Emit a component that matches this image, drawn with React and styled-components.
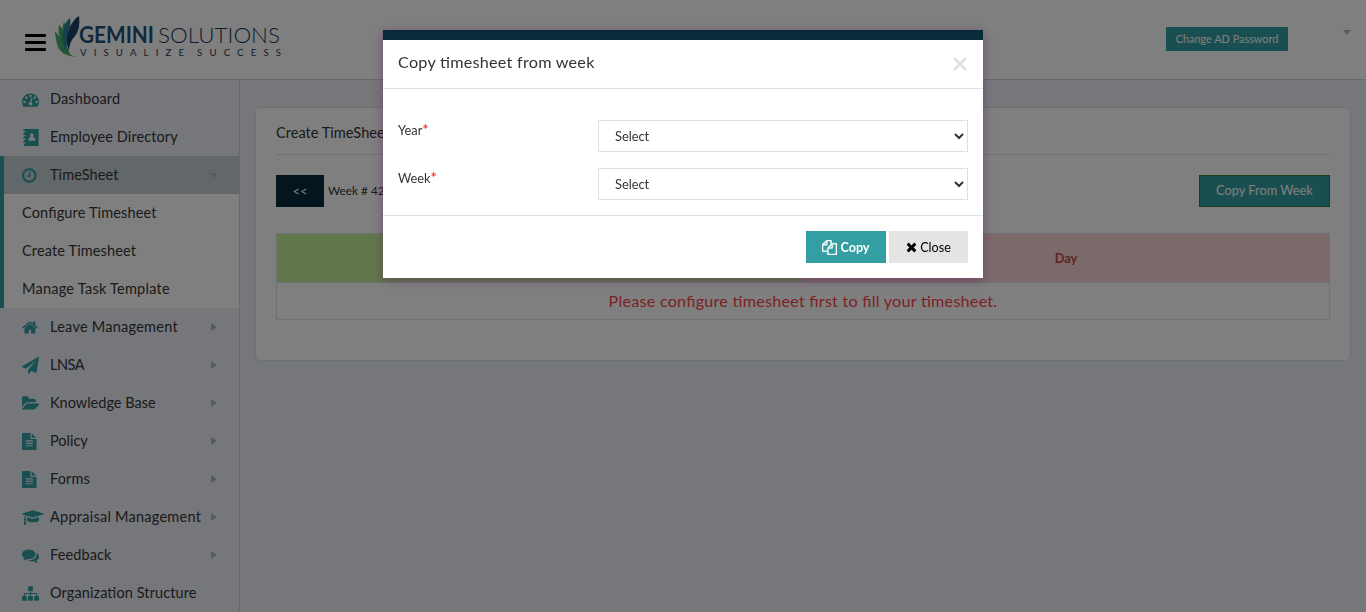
import React from 'react';
import styled, { createGlobalStyle } from 'styled-components';

const teal = '#349fa2';
const navy = '#092a3b';
const line = '#d8e2e7';

const GlobalStyle = createGlobalStyle`
  * { box-sizing: border-box; }
  html, body { margin: 0; height: 612px; overflow: hidden; }
  body {
    background: #eceff4;
    color: #343434;
    font-family: Lato, "Liberation Sans", sans-serif;
    font-size: 14.5px;
    font-feature-settings: "liga" 1;
  }
`;

const Page = styled.div`
  display: flex;
  flex-direction: column;
  height: 612px;
`;

const Header = styled.header`
  display: flex;
  align-items: flex-start;
  height: 80px;
  padding: 0 15px 0 25px;
  background: #fff;
  border-bottom: 1px solid #c5d6de;
`;

const Burger = styled.div`
  display: flex;
  flex-direction: column;
  gap: 4px;
  width: 21px;
  margin-top: 34px;
  i { height: 3px; background: #000; border-radius: 1px; }
`;

const LogoSvg = styled.svg`
  display: block;
  width: 230px;
  height: 46px;
  margin: 14px auto 0 8px;
`;

const PasswordButton = styled.button`
  width: 122px;
  height: 24px;
  margin: 27px 55px 0 0;
  padding: 0 0 2px;
  border: 0;
  background: ${teal};
  color: #fff;
  font: 10.9px Lato, sans-serif;
`;

const Caret = styled.i`
  border: 4px solid transparent;
  border-bottom-width: 0;
  border-top: 5px solid #adb7be;
  margin-top: 30px;
`;

const Body = styled.div`
  display: flex;
  flex: 1;
  min-height: 0;
`;

const Sidebar = styled.nav`
  width: 240px;
  border-right: 1px solid #c5d6de;
  overflow: hidden;
`;

const Group = styled.div`
  box-shadow: inset 4px 0 0 ${teal};
  background: #fff;
`;

const Item = styled.a`
  display: flex;
  align-items: center;
  height: 38px;
  padding-left: 22px;
  ${(p) => p.$active && `background: #c4ced3; box-shadow: inset 4px 0 0 ${teal};`}
`;

const Label = styled.span`
  padding-bottom: 2px;
  white-space: nowrap;
  letter-spacing: ${(p) => p.$spacing}px;
`;

const IconBox = styled.span`
  display: flex;
  width: 28px;
  color: ${teal};
`;

const Arrow = styled.i`
  margin-left: auto;
  margin-right: ${(p) => (p.$down ? 21 : 22)}px;
  border-style: solid;
  border-color: transparent;
  ${(p) =>
    p.$down
      ? 'border-width: 5px 4px 0; border-top-color: #adb7be;'
      : 'border-width: 4px 0 4px 6px; border-left-color: #adb7be;'}
`;

const Glyph = styled.svg`
  display: block;
  flex: none;
  fill: currentColor;
`;

const Main = styled.main`
  flex: 1;
  padding: 27px 15px 0;
`;

const Card = styled.section`
  height: 254px;
  padding: 0 20px;
  background: #fff;
  border: 1px solid ${line};
  border-radius: 5px;
`;

const CardTitle = styled.h5`
  display: flex;
  align-items: center;
  height: 47px;
  margin: 0;
  padding-top: 2px;
  border-bottom: 1px solid ${line};
  font-size: 14.6px;
  font-weight: 400;
`;

const Toolbar = styled.div`
  display: flex;
  align-items: center;
  gap: 4px;
  height: 32px;
  margin-top: 20px;
  font-size: 11.8px;
  span { padding-bottom: 2px; }
`;

const NavButton = styled.button`
  width: 48px;
  height: 32px;
  padding-bottom: 2px;
  border: 0;
  background: ${navy};
  color: #fff;
  font: 13px Lato, sans-serif;
`;

const CopyWeekButton = styled.button`
  width: 131px;
  height: 32px;
  margin-left: auto;
  padding: 0 0 2px;
  border: 1px solid #2a7f3a;
  background: ${teal};
  color: #fff;
  font: 12.8px Lato, sans-serif;
`;

const Table = styled.div`
  display: grid;
  grid-template-columns: 1fr 1fr;
  margin-top: 26px;
  border: 1px solid ${line};
`;

const HeadCell = styled.div`
  display: flex;
  align-items: center;
  justify-content: center;
  height: 49px;
  padding-bottom: 1px;
  background: ${(p) => p.$bg};
  border-bottom: 1px solid ${line};
  color: #b94a48;
  font-size: 12.8px;
  font-weight: 700;
`;

const Message = styled.div`
  grid-column: 1 / -1;
  height: 36px;
  line-height: 36px;
  text-align: center;
  color: #fa424a;
  font-size: 16.2px;
  letter-spacing: 0.22px;
`;

const Overlay = styled.div`
  position: fixed;
  inset: 0;
  background: rgba(0, 0, 0, 0.5);
`;

const Modal = styled.div`
  width: 600px;
  height: 248px;
  margin: 30px auto 0;
  background: #fff;
  border-top: 10px solid ${navy};
  box-shadow: 0 2px 10px rgba(90, 0, 90, 0.38);
`;

const ModalHeader = styled.div`
  display: flex;
  justify-content: space-between;
  height: 49px;
  padding: 12px 16px 0 15px;
  border-bottom: 1px solid ${line};
  font-size: 16.2px;
  letter-spacing: 0.24px;
`;

const CloseX = styled.svg`
  width: 14px;
  height: 14px;
  margin-top: 5px;
  stroke: #e2e3e8;
  stroke-width: 3;
  stroke-linecap: round;
`;

const ModalBody = styled.div`
  display: flex;
  flex-direction: column;
  gap: 16px;
  height: 127px;
  padding: 31px 15px 0;
  border-bottom: 1px solid ${line};
`;

const Field = styled.label`
  display: flex;
  height: 32px;
  font-size: 12.8px;
  span { width: 200px; padding-top: 2px; }
  b { color: #f00; font-weight: 400; font-size: 15px; line-height: 12px; }
`;

const Select = styled.select`
  width: 370px;
  height: 32px;
  padding: 0 12px;
  border: 1px solid ${line};
  border-radius: 0;
  background: #fff;
  color: #343434;
  font: 12.8px Lato, sans-serif;
`;

const ModalFooter = styled.div`
  display: flex;
  justify-content: flex-end;
  gap: 3px;
  padding: 15px 15px 0;
`;

const ModalButton = styled.button`
  display: flex;
  align-items: center;
  justify-content: center;
  gap: 3px;
  width: ${(p) => (p.$primary ? 80 : 79)}px;
  height: 32px;
  padding: 0;
  border: 0;
  background: ${(p) => (p.$primary ? teal : '#e4e4e4')};
  color: ${(p) => (p.$primary ? '#fff' : '#000')};
  font: ${(p) => (p.$primary ? 700 : 400)} 12.6px Lato, sans-serif;
`;

/* [x offset, width, path] on a 1792-unit em */
const icons = {
  dash: [0, 1792, 'M384 1152q0-53-37.5-90.5t-90.5-37.5-90.5 37.5-37.5 90.5 37.5 90.5 90.5 37.5 90.5-37.5 37.5-90.5zm192-448q0-53-37.5-90.5t-90.5-37.5-90.5 37.5-37.5 90.5 37.5 90.5 90.5 37.5 90.5-37.5 37.5-90.5zm428 481l101-382q6-26-7.5-48.5t-38.5-29.5-48 6.5-30 39.5l-101 382q-60 5-107 43.5t-63 98.5q-20 77 20 146t117 89 146-20 89-117q16-60-6-117t-72-91zm660-33q0-53-37.5-90.5t-90.5-37.5-90.5 37.5-37.5 90.5 37.5 90.5 90.5 37.5 90.5-37.5 37.5-90.5zm-640-640q0-53-37.5-90.5t-90.5-37.5-90.5 37.5-37.5 90.5 37.5 90.5 90.5 37.5 90.5-37.5 37.5-90.5zm448 192q0-53-37.5-90.5t-90.5-37.5-90.5 37.5-37.5 90.5 37.5 90.5 90.5 37.5 90.5-37.5 37.5-90.5zm320 448q0 261-141 483-19 29-54 29h-1402q-35 0-54-29-141-221-141-483 0-182 71-348t191-286 286-191 348-71 348 71 286 191 191 286 71 348z'],
  book: [0, 1792, 'M260 0h1430q60 0 60 60v1672q0 60-60 60h-1430q-60 0-60-60v-170h170v-130h-250v-120h80v-150h170v-130h-250v-120h80v-150h170v-130h-250v-120h80v-150h170v-130h-250v-120h80v-62q0-60 60-60zM1035 450a190 220 0 1 0 1 0zM890 850q-210 30-210 300 0 80 80 80h560q80 0 80-80 0-270-210-300-150 110-300 0z'],
  clock: [128, 1536, 'M1024 544v448q0 14-9 23t-23 9h-320q-14 0-23-9t-9-23v-64q0-14 9-23t23-9h224v-352q0-14 9-23t23-9h64q14 0 23 9t9 23zm416 352q0-148-73-273t-198-198-273-73-273 73-198 198-73 273 73 273 198 198 273 73 273-73 198-198 73-273zm224 0q0 209-103 385.5t-279.5 279.5-385.5 103-385.5-103-279.5-279.5-103-385.5 103-385.5 279.5-279.5 385.5-103 385.5 103 279.5 279.5 103 385.5z'],
  home: [64, 1664, 'M1472 992v480q0 26-19 45t-45 19h-384v-384h-256v384h-384q-26 0-45-19t-19-45v-480q0-1 .5-3t.5-3l575-474 575 474q1 2 1 6zm223-69l-62 74q-8 9-21 11h-3q-13 0-21-7l-692-577-692 577q-12 8-24 7-13-2-21-11l-62-74q-8-10-7-23.5t11-21.5l719-599q32-26 76-26t76 26l244 204v-195q0-14 9-23t23-9h192q14 0 23 9t9 23v408l219 182q10 8 11 21.5t-7 23.5z'],
  plane: [0, 1792, 'M1764 11q33 24 27 64l-256 1536q-5 29-32 45-14 8-31 8-11 0-24-5l-453-185-242 295q-18 23-49 23-13 0-22-4-19-7-30.5-23.5t-11.5-36.5v-349l864-1059-1069 925-395-162q-37-14-40-55-2-40 32-59l1664-960q15-9 32-9 20 0 36 11z'],
  folder: [0, 1920, 'M1815 952q0 31-31 66l-336 396q-43 51-120.5 86.5t-143.5 35.5h-1088q-34 0-60.5-13t-26.5-43q0-31 31-66l336-396q43-51 120.5-86.5t143.5-35.5h1088q34 0 60.5 13t26.5 43zm-343-344v160h-832q-94 0-197 47.5t-164 119.5l-337 396-5 6q0-4-.5-12.5t-.5-12.5v-960q0-92 66-158t158-66h320q92 0 158 66t66 158v32h544q92 0 158 66t66 158z'],
  file: [128, 1536, 'M1596 476q14 14 28 36h-472v-472q22 14 36 28zm-476 164h544v1056q0 40-28 68t-68 28h-1344q-40 0-68-28t-28-68v-1600q0-40 28-68t68-28h800v544q0 40 28 68t68 28zm160 736v-64q0-14-9-23t-23-9h-704q-14 0-23 9t-9 23v64q0 14 9 23t23 9h704q14 0 23-9t9-23zm0-256v-64q0-14-9-23t-23-9h-704q-14 0-23 9t-9 23v64q0 14 9 23t23 9h704q14 0 23-9t9-23zm0-256v-64q0-14-9-23t-23-9h-704q-14 0-23 9t-9 23v64q0 14 9 23t23 9h704q14 0 23-9t9-23z'],
  cap: [0, 2304, 'M1774 836l18 316q4 69-82 128t-235 93.5-323 34.5-323-34.5-235-93.5-82-128l18-316 574 181q22 7 48 7t48-7zm530-324q0 23-22 31l-1120 352q-4 1-10 1t-10-1l-652-206q-43 34-71 111.5t-34 178.5q63 36 63 109 0 69-58 107l58 433q2 14-8 25-9 11-24 11h-192q-15 0-24-11-10-11-8-25l58-433q-58-38-58-107 0-73 65-111 11-207 98-330l-333-104q-22-8-22-31t22-31l1120-352q4-1 10-1t10 1l1120 352q22 8 22 31z'],
  comments: [0, 1792, 'M1408 768q0 139-94 257t-256.5 186.5-353.5 68.5q-86 0-176-16-124 88-278 128-36 9-86 16h-3q-11 0-20.5-8t-11.5-21q-1-3-1-6.5t.5-6.5 2-6l2.5-5 3.5-5.5 4-5 4.5-5 4-4.5q5-6 23-25t26-29.5 22.5-29 25-38.5 20.5-44q-124-72-195-177t-71-224q0-139 94-257t256.5-186.5 353.5-68.5 353.5 68.5 256.5 186.5 94 257zm384 256q0 120-71 224.5t-195 176.5q10 24 20.5 44t25 38.5 22.5 29 26 29.5 23 25q1 1 4 4.5t4.5 5 4 5 3.5 5.5l2.5 5 2 6 .5 6.5-1 6.5q-3 14-13 22t-22 7q-50-7-86-16-154-40-278-128-90 16-176 16-271 0-472-132 58 4 88 4 161 0 309-45t264-129q125-92 192-212t67-254q0-77-23-152 129 71 204 178t75 230z'],
  sitemap: [0, 1792, 'M1792 1248v320q0 40-28 68t-68 28h-320q-40 0-68-28t-28-68v-320q0-40 28-68t68-28h96v-192h-512v192h96q40 0 68 28t28 68v320q0 40-28 68t-68 28h-320q-40 0-68-28t-28-68v-320q0-40 28-68t68-28h96v-192h-512v192h96q40 0 68 28t28 68v320q0 40-28 68t-68 28h-320q-40 0-68-28t-28-68v-320q0-40 28-68t68-28h96v-192q0-52 38-90t90-38h512v-192h-96q-40 0-68-28t-28-68v-320q0-40 28-68t68-28h320q40 0 68 28t28 68v320q0 40-28 68t-68 28h-96v192h512q52 0 90 38t38 90v192h96q40 0 68 28t28 68z'],
  files: [0, 1792, 'M1696 384q40 0 68 28t28 68v1216q0 40-28 68t-68 28h-960q-40 0-68-28t-28-68v-288h-544q-40 0-68-28t-28-68v-672q0-40 20-88t48-76l408-408q28-28 76-48t88-20h416q40 0 68 28t28 68v328q68-40 128-40h416zm-544 213l-299 299h299v-299zm-640-384l-299 299h299v-299zm196 647l316-316v-416h-384v416q0 40-28 68t-68 28h-416v640h512v-256q0-40 20-88t48-76zm956 804v-1152h-384v416q0 40-28 68t-68 28h-416v640h896z'],
  times: [192, 1408, 'M1490 1322q0 40-28 68l-136 136q-28 28-68 28t-68-28l-294-294-294 294q-28 28-68 28t-68-28l-136-136q-28-28-28-68t28-68l294-294-294-294q-28-28-28-68t28-68l136-136q28-28 68-28t68 28l294 294 294-294q28-28 68-28t68 28l136 136q28 28 28 68t-28 68l-294 294 294 294q28 28 28 68z'],
};

function Icon({ name, size = 17 }) {
  const [x, w, d] = icons[name];
  return (
    <Glyph
      width={(w / 1792) * size}
      height={size}
      viewBox={`${x} 0 ${w} 1792`}
      strokeWidth={name === 'files' ? 50 : 0}
      stroke="currentColor"
    >
      <path d={d} fillRule={name === 'book' ? 'evenodd' : 'nonzero'} />
    </Glyph>
  );
}

function MenuItem({ icon, label, arrow, active, spacing = 0 }) {
  return (
    <Item $active={active}>
      {icon && <IconBox><Icon name={icon} /></IconBox>}
      <Label $spacing={spacing}>{label}</Label>
      {arrow && <Arrow $down={arrow === 'down'} />}
    </Item>
  );
}

function Logo() {
  return (
    <LogoSvg viewBox="54 14 230 46">
      <path d="M55 31c4 4 6 9 8 15s5 9 14 11c-12-1-18-5-20-13-1-5-2-9-2-13z" fill="#45ad65" />
      <path d="M59 25c5 4 6 9 6 15 1 7 3 12 7 16-8-4-11-9-12-16-1-6-2-10-1-15z" fill="#3fae6b" />
      <path d="M64 22c3 5 4 9 3 15-1 8 0 13 4 18-7-5-9-11-8-18 0-6-1-10 1-15z" fill="#36a179" />
      <path d="M70 18c1 6 0 10-2 15-2 6-2 12 0 19-5-7-6-12-5-19 1-6 2-11 7-15z" fill="#2b8590" />
      <path d="M79 16c1 8 0 15-4 20-4 4-6 9-6 15-3-8-3-14 0-21 2-6 5-11 10-14z" fill="#1c4167" />
      <g fill="#1c3a56" fontFamily="Lato, sans-serif">
        <text x="79" y="43" fontSize="22" fontWeight="700" textLength="75" lengthAdjust="spacingAndGlyphs" fill="#24507a">GEMINI</text>
        <text x="158" y="43" fontSize="22" fontWeight="300" textLength="122" lengthAdjust="spacingAndGlyphs">SOLUTIONS</text>
        <text x="80" y="56" fontSize="9.6" textLength="104">VISUALIZE</text>
        <text x="197" y="56" fontSize="9.6" textLength="84">SUCCESS</text>
      </g>
    </LogoSvg>
  );
}

export default function App() {
  return (
    <>
      <GlobalStyle />
      <Page>
        <Header>
          <Burger><i /><i /><i /></Burger>
          <Logo />
          <PasswordButton>Change AD Password</PasswordButton>
          <Caret />
        </Header>
        <Body>
          <Sidebar>
            <MenuItem icon="dash" label="Dashboard" spacing={0.12} />
            <MenuItem icon="book" label="Employee Directory" spacing={0.1} />
            <Group>
              <MenuItem icon="clock" label="TimeSheet" arrow="down" active spacing={0.1} />
              <MenuItem label="Configure Timesheet" spacing={0.15} />
              <MenuItem label="Create Timesheet" spacing={0.14} />
              <MenuItem label="Manage Task Template" spacing={0.24} />
            </Group>
            <MenuItem icon="home" label="Leave Management" arrow="right" spacing={0.25} />
            <MenuItem icon="plane" label="LNSA" arrow="right" spacing={-0.5} />
            <MenuItem icon="folder" label="Knowledge Base" arrow="right" />
            <MenuItem icon="file" label="Policy" arrow="right" />
            <MenuItem icon="file" label="Forms" arrow="right" spacing={0.15} />
            <MenuItem icon="cap" label="Appraisal Management" arrow="right" spacing={0.25} />
            <MenuItem icon="comments" label="Feedback" arrow="right" spacing={0.12} />
            <MenuItem icon="sitemap" label="Organization Structure" spacing={0.1} />
          </Sidebar>
          <Main>
            <Card>
              <CardTitle>Create TimeSheet</CardTitle>
              <Toolbar>
                <NavButton>&lt;&lt;</NavButton>
                <span>Week # 42</span>
                <CopyWeekButton>Copy From Week</CopyWeekButton>
              </Toolbar>
              <Table>
                <HeadCell $bg="#c2ee96" />
                <HeadCell $bg="#f8d5d5">Day</HeadCell>
                <Message>Please configure timesheet first to fill your timesheet.</Message>
              </Table>
            </Card>
          </Main>
        </Body>
      </Page>
      <Overlay>
        <Modal>
          <ModalHeader>
            Copy timesheet from week
            <CloseX viewBox="0 0 14 14"><path d="M2 2l10 10M12 2L2 12" /></CloseX>
          </ModalHeader>
          <ModalBody>
            <Field>
              <span>Year<b>*</b></span>
              <Select><option>Select</option></Select>
            </Field>
            <Field>
              <span>Week<b>*</b></span>
              <Select><option>Select</option></Select>
            </Field>
          </ModalBody>
          <ModalFooter>
            <ModalButton $primary><Icon name="files" size={15} />Copy</ModalButton>
            <ModalButton><Icon name="times" size={14} />Close</ModalButton>
          </ModalFooter>
        </Modal>
      </Overlay>
    </>
  );
}
